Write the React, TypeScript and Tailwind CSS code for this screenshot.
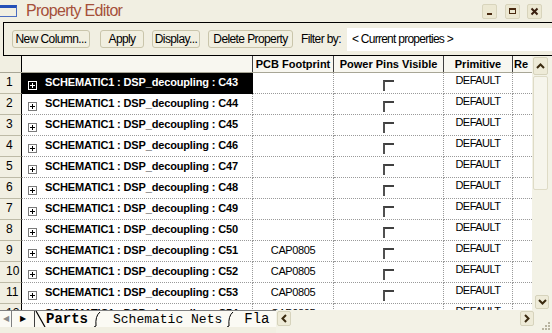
import React from "react";

const rows = Array.from({ length: 12 }, (_, i) => ({
  n: i + 1,
  name: `SCHEMATIC1 : DSP_decoupling : C${43 + i}`,
  pcb: i >= 8 ? "CAP0805" : "",
}));

function TitleBtn({ children }: { children: React.ReactNode }) {
  return (
    <div className="w-[15px] h-[15px] rounded-[2px] border border-[#d8d4bc] bg-[#ece8d2] flex items-center justify-center">
      {children}
    </div>
  );
}

function Btn({ w, children }: { w: string; children: React.ReactNode }) {
  return (
    <div
      className={`${w} h-[18px] shrink-0 rounded-[3px] border border-[#c9c5ab] bg-[#f1efe0] flex items-center justify-center text-[12px] tracking-[-0.6px] leading-none`}
    >
      {children}
    </div>
  );
}

function Check() {
  return <div className="w-[11px] h-[11px] border-t-2 border-l-2 border-t-[#404040] border-l-[#505050] bg-white" />;
}

export default function App() {
  return (
    <div className="w-[552px] h-[333px] overflow-hidden bg-[#f1efe2] flex flex-col font-['Liberation_Sans',Arial,sans-serif] text-black">
      {/* Title bar */}
      <div className="h-[22px] shrink-0 flex items-center">
        <div className="w-[17px] h-[12px] border border-[#4a6cc0] border-t-[3px] border-t-[#2450b8] border-l-0" />
        <span className="ml-[9px] text-[16px] tracking-[-0.7px] text-[#a5503a] leading-none">Property Editor</span>
        <div className="ml-auto mr-[10px] flex items-center">
          <TitleBtn>
            <div className="w-[5px] h-[2px] bg-[#4a2a10] mt-[6px]" />
          </TitleBtn>
          <div className="w-[8px]" />
          <TitleBtn>
            <div className="w-[7px] h-[6px] border border-t-2 border-[#4a2a10]" />
          </TitleBtn>
          <div className="w-[7px]" />
          <TitleBtn>
            <svg width="9" height="9" viewBox="0 0 9 9">
              <path d="M1.5 1.5 L7.5 7.5 M7.5 1.5 L1.5 7.5" stroke="#3a2010" strokeWidth="2" />
            </svg>
          </TitleBtn>
        </div>
      </div>

      {/* Toolbar */}
      <div className="ml-[3px] h-[34px] shrink-0 border border-black border-r-0 flex items-center">
        <div className="ml-[8px]" />
        <Btn w="w-[78px]">New Column...</Btn>
        <div className="w-[10px] shrink-0" />
        <Btn w="w-[44px]">Apply</Btn>
        <div className="w-[8px] shrink-0" />
        <Btn w="w-[48px]">Display...</Btn>
        <div className="w-[8px] shrink-0" />
        <Btn w="w-[85px]">Delete Property</Btn>
        <span className="ml-[8px] text-[12px] tracking-[-0.6px] leading-none">Filter by:</span>
        <div className="ml-[6px] flex-1 h-[23px] bg-white flex items-center pl-[5px] text-[12px] tracking-[-0.75px] leading-none whitespace-nowrap">
          &lt; Current properties &gt;
        </div>
      </div>

      {/* Grid area */}
      <div className="flex-1 min-h-0 flex">
        <div className="w-[532px] overflow-hidden">
          {/* header */}
          <div className="flex h-[17px] border-b border-[#a8a696] text-[11px] font-bold leading-none">
            <div className="w-[22px] shrink-0 bg-[#f1efe2] border-r border-black" />
            <div className="w-[231px] shrink-0 bg-[#f8f7f0] border-r border-[#404040]" />
            <div className="w-[81px] shrink-0 bg-[#f8f7f0] border-r border-[#404040] flex items-center justify-center">PCB Footprint</div>
            <div className="w-[110px] shrink-0 bg-[#f8f7f0] border-r border-[#404040] flex items-center justify-center whitespace-nowrap">Power Pins Visible</div>
            <div className="w-[69px] shrink-0 bg-[#f8f7f0] border-r border-[#404040] flex items-center justify-center">Primitive</div>
            <div className="w-[19px] shrink-0 bg-[#f8f7f0] flex items-center pl-[1px] overflow-hidden whitespace-nowrap">Re</div>
          </div>
          {rows.map((r) => {
            const sel = r.n === 1;
            return (
              <div key={r.n} className="flex h-[21px]">
                <div className="w-[22px] shrink-0 bg-[#f1efe2] border-r border-black border-b border-b-[#bdbaa6] flex items-center pl-[6px] pb-[2px] text-[12px] leading-none">
                  {r.n}
                </div>
                <div
                  className={`w-[231px] shrink-0 flex items-center border-b border-dotted ${
                    sel ? "bg-black text-white border-black" : "bg-white border-[#9a9a9a] border-r"
                  }`}
                >
                  <div
                    className={`ml-[6px] mt-[5px] w-[9px] h-[9px] border flex items-center justify-center ${
                      sel ? "border-white" : "border-[#7a7a7a]"
                    }`}
                  >
                    <svg width="7" height="7" viewBox="0 0 7 7">
                      <path d="M1 3.5 H6 M3.5 1 V6" stroke={sel ? "#fff" : "#000"} strokeWidth="1" />
                    </svg>
                  </div>
                  <span className="ml-[8px] mb-[2px] text-[11px] font-bold tracking-[-0.15px] leading-none whitespace-nowrap">{r.name}</span>
                </div>
                <div className="w-[81px] shrink-0 bg-white border-r border-b border-dotted border-[#9a9a9a] flex items-center justify-center pb-[2px] text-[11px] tracking-[-0.4px] leading-none">
                  {r.pcb}
                </div>
                <div className="w-[110px] shrink-0 bg-white border-r border-b border-dotted border-[#9a9a9a] flex justify-center pt-[7px]">
                  <Check />
                </div>
                <div className="w-[69px] shrink-0 bg-white border-r border-b border-dotted border-[#9a9a9a] flex justify-center pt-[2px] text-[11px] tracking-[-0.5px] leading-none">
                  DEFAULT
                </div>
                <div className="w-[19px] shrink-0 bg-white border-b border-dotted border-[#9a9a9a]" />
              </div>
            );
          })}
        </div>
        {/* vertical scrollbar */}
        <div className="w-[20px] shrink-0 bg-[#f3f2e6] flex flex-col pl-[1px] pt-[1px] pb-[1px]">
          <div className="w-[15px] h-[18px] rounded-[2px] border border-[#d6d3bc] bg-[#eeebd8] flex items-center justify-center">
            <svg width="9" height="6" viewBox="0 0 9 6">
              <path d="M1 5 L4.5 1.5 L8 5" stroke="#3a2a10" strokeWidth="2" fill="none" />
            </svg>
          </div>
          <div className="w-[15px] h-[114px] mt-[1px] rounded-[2px] border border-[#dedbc6] bg-[#f6f5ec]" />
          <div className="flex-1" />
          <div className="ml-[2px] w-[14px] h-[14px] rounded-[2px] border border-[#d6d3bc] bg-[#eeebd8] flex items-center justify-center">
            <svg width="9" height="6" viewBox="0 0 9 6">
              <path d="M1 1 L4.5 4.5 L8 1" stroke="#3a2a10" strokeWidth="2" fill="none" />
            </svg>
          </div>
        </div>
      </div>

      {/* Bottom bar */}
      <div className="h-[23px] shrink-0 flex">
        <div className="w-[276px] shrink-0 h-[17px] flex items-stretch bg-[#fbfaf4] border-t border-[#808080] overflow-hidden">
          <div className="w-[12px] shrink-0 border-r border-[#808080] flex items-center justify-center text-[8px] text-[#8a8a8a]">◀</div>
          <div className="w-[23px] shrink-0 border-r border-[#404040] flex items-center justify-center text-[8px] text-black">▶</div>
          <svg width="11" height="16" viewBox="0 0 11 16" className="shrink-0">
            <path d="M1 0 L10 16" stroke="#000" strokeWidth="1.2" />
          </svg>
          <span className="font-['Liberation_Mono',monospace] font-bold text-[14px] leading-[17px] whitespace-nowrap">Parts</span>
          <svg width="12" height="16" viewBox="0 0 12 16" className="shrink-0 ml-[4px]">
            <path d="M8 1 Q3 5 4 15 L2 16" stroke="#000" strokeWidth="1" fill="none" />
          </svg>
          <span className="ml-[9px] font-['Liberation_Mono',monospace] text-[13px] leading-[17px] whitespace-nowrap">Schematic Nets</span>
          <svg width="12" height="16" viewBox="0 0 12 16" className="shrink-0 ml-[3px]">
            <path d="M8 1 Q3 5 4 15 L2 16" stroke="#000" strokeWidth="1" fill="none" />
          </svg>
          <span className="ml-[7px] font-['Liberation_Mono',monospace] text-[14px] leading-[17px] whitespace-nowrap">Fla</span>
        </div>
        <div className="flex-1 flex items-start pt-[1px] bg-[#f3f2e6]">
          <div className="ml-[1px] w-[14px] h-[15px] rounded-[2px] border border-[#d6d3bc] bg-[#eeebd8] flex items-center justify-center">
            <svg width="6" height="9" viewBox="0 0 6 9">
              <path d="M5 1 L1.5 4.5 L5 8" stroke="#3a2a10" strokeWidth="2" fill="none" />
            </svg>
          </div>
          <div className="flex-1" />
          <div className="w-[14px] h-[15px] rounded-[2px] border border-[#d6d3bc] bg-[#eeebd8] flex items-center justify-center">
            <svg width="6" height="9" viewBox="0 0 6 9">
              <path d="M1 1 L4.5 4.5 L1 8" stroke="#3a2a10" strokeWidth="2" fill="none" />
            </svg>
          </div>
          <div className="w-[18px] h-[22px] flex items-end justify-end pr-[1px]">
            <svg width="12" height="12" viewBox="0 0 12 12">
              <g fill="#b8b4a0">
                <rect x="9" y="1" width="2" height="2" />
                <rect x="6" y="4" width="2" height="2" />
                <rect x="9" y="4" width="2" height="2" />
                <rect x="3" y="7" width="2" height="2" />
                <rect x="6" y="7" width="2" height="2" />
                <rect x="9" y="7" width="2" height="2" />
              </g>
            </svg>
          </div>
        </div>
      </div>
    </div>
  );
}
